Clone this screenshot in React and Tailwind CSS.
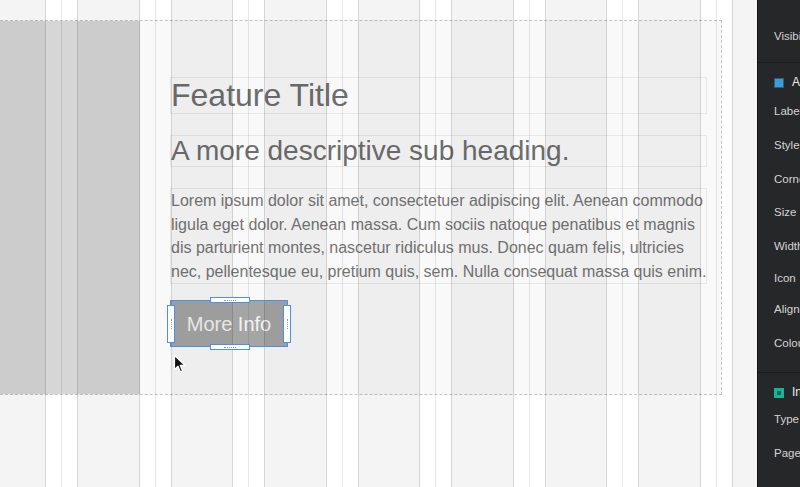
import React from 'react';

const font = { fontFamily: '"Liberation Sans", Arial, Helvetica, sans-serif' };

const GridOverlay = () => (
    <div className="absolute inset-0 z-10 pointer-events-none overflow-hidden">
        <div className="flex h-full ml-[-31.5px]">
            {Array.from({ length: 9 }).map((_, i) => (
                <div key={i} className="w-[93.5px] shrink-0 h-full px-[15px] border-r border-black/[0.09]">
                    <div className="h-full border-x border-black/[0.12] bg-black/[0.043]" />
                </div>
            ))}
        </div>
    </div>
);

const Handle = ({ className, vertical }) => (
    <div className={`absolute bg-white border border-[#4a90e8] flex items-center justify-center ${className}`}>
        {vertical ? (
            <div className="h-[10px] border-l border-dotted border-[#9a9a9a]" />
        ) : (
            <div className="w-[12px] border-t border-dotted border-[#9a9a9a]" />
        )}
    </div>
);

const Cursor = () => (
    <svg className="absolute z-30 left-[173px] top-[354px]" width="14" height="20" viewBox="0 0 14 20">
        <path d="M1.5 1.5 L1.5 15.5 L5 12.2 L7.4 17.8 L9.6 16.9 L7.3 11.4 L12 11.4 Z" fill="#111" stroke="#fff" strokeWidth="1.2" strokeLinejoin="round" />
    </svg>
);

const Canvas = () => (
    <div className="relative w-[757px] h-full overflow-hidden bg-white">
        <div className="mt-[20px] ml-[-20px] w-[742px] h-[375px] flex border-y border-r border-dashed border-[#c4c4c4] bg-[#f9f9f9]">
            <div className="w-[160px] h-full bg-[#d6d6d6]" />
            <div className="ml-[30px] w-[537px] pt-[56px] flex flex-col items-start">
                <div className="w-full h-[37px] border border-black/[0.07] text-[32px] leading-[35px] text-[#6d6d6d] whitespace-nowrap">
                    Feature Title
                </div>
                <div className="w-full h-[32px] mt-[21px] border border-black/[0.07] text-[28px] leading-[30px] text-[#6d6d6d] whitespace-nowrap">
                    A more descriptive sub heading.
                </div>
                <div className="w-full mt-[21px] border border-black/[0.07] text-[16px] leading-[23.5px] text-[#747474]">
                    <div className="whitespace-nowrap">Lorem ipsum dolor sit amet, consectetuer adipiscing elit. Aenean commodo</div>
                    <div className="whitespace-nowrap">ligula eget dolor. Aenean massa. Cum sociis natoque penatibus et magnis</div>
                    <div className="whitespace-nowrap">dis parturient montes, nascetur ridiculus mus. Donec quam felis, ultricies</div>
                    <div className="whitespace-nowrap">nec, pellentesque eu, pretium quis, sem. Nulla consequat massa quis enim.</div>
                </div>
                <div className="relative mt-[16px]">
                    <button className="w-[118px] h-[47px] bg-[#a5a5a5] text-[20px] text-[#f2f2f2] flex items-center justify-center">
                        More Info
                    </button>
                    <div className="absolute inset-0 z-20 border border-[#4a90e8]">
                        <Handle className="left-[39px] top-[-4px] w-[40px] h-[6px]" />
                        <Handle className="left-[39px] bottom-[-4px] w-[40px] h-[6px]" />
                        <Handle vertical className="left-[-4px] top-[4px] w-[8px] h-[38px]" />
                        <Handle vertical className="right-[-4px] top-[4px] w-[8px] h-[38px]" />
                    </div>
                </div>
            </div>
        </div>
        <GridOverlay />
        <Cursor />
    </div>
);

const Row = ({ className, children }) => (
    <div className={`h-[13px] leading-[13px] whitespace-nowrap text-[#d4d4d4] ${className}`}>{children}</div>
);

const Sidebar = () => (
    <div className="w-[43px] h-full overflow-hidden bg-[#262728] border-l border-[#141414] text-[11.5px] flex flex-col">
        <div className="h-[62px] pt-[30px] pl-[16px] flex flex-col">
            <Row>Visibility</Row>
        </div>
        <div className="h-px bg-[#1a1a1a]" />
        <div className="h-[309px] pl-[16px] flex flex-col">
            <div className="mt-[13px] h-[13px] flex items-center gap-[8px]">
                <div className="w-[10px] h-[10px] bg-[#3f9bd6] border border-[#2a5f80] shrink-0" />
                <span className="leading-[13px] text-[12px] text-[#ececec]">Appearance</span>
            </div>
            <Row className="mt-[16px]">Label</Row>
            <Row className="mt-[21px]">Style</Row>
            <Row className="mt-[21px]">Corners</Row>
            <Row className="mt-[20px]">Size</Row>
            <Row className="mt-[21px]">Width</Row>
            <Row className="mt-[19px]">Icon</Row>
            <Row className="mt-[18px]">Alignment</Row>
            <Row className="mt-[21px]">Colour</Row>
        </div>
        <div className="h-px bg-[#1a1a1a]" />
        <div className="pl-[16px] flex flex-col">
            <div className="mt-[13px] h-[13px] flex items-center gap-[8px]">
                <div className="w-[10px] h-[10px] bg-[#1bb394] flex items-center justify-center shrink-0">
                    <div className="w-[4px] h-[4px] bg-[#0d6b58]" />
                </div>
                <span className="leading-[13px] text-[12px] text-[#ececec]">Interaction</span>
            </div>
            <Row className="mt-[14px]">Type</Row>
            <Row className="mt-[21px]">Page</Row>
        </div>
    </div>
);

const App = () => {
    return (
        <div className="w-[800px] h-[487px] flex overflow-hidden bg-white" style={font}>
            <Canvas />
            <Sidebar />
        </div>
    );
};

export default App;
